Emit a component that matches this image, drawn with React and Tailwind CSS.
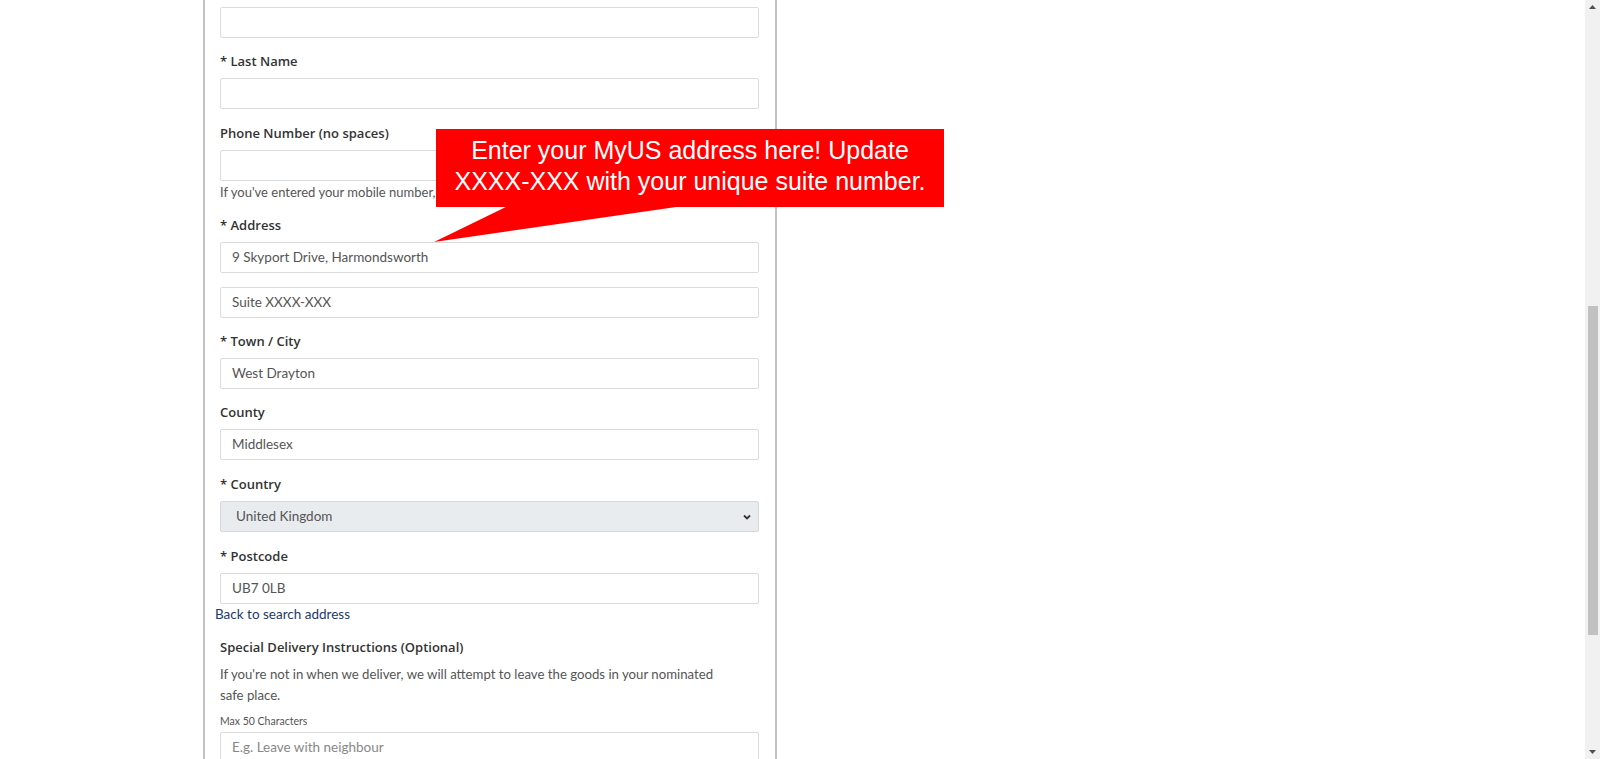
import React from 'react'

const font = { fontFamily: 'Lato, "Noto Sans", Arial, sans-serif' }
const labelFont = { fontFamily: '"Open Sans", Lato, Arial, sans-serif' }

const Label = ({ children }) => (
  <div className="text-[13px] leading-[18px] font-semibold text-[#333] mb-[8px]" style={labelFont}>{children}</div>
)

const Input = ({ value, placeholder, className = '' }) => (
  <div className={`h-[31px] border border-[#dcdcdc] rounded-[2px] bg-white px-[11px] flex items-center text-[13.5px] ${className}`}>
    {value ? <span className="text-[#555]">{value}</span> : <span className="text-[#888]">{placeholder}</span>}
  </div>
)

const Field = ({ label, value, gap = 'mb-[15px]' }) => (
  <div className={gap}>
    <Label>{label}</Label>
    <Input value={value} />
  </div>
)

function Callout() {
  return (
    <div className="absolute left-[436px] top-[129px] w-[508px]">
      <div className="h-[78px] bg-[#ff0000] flex flex-col items-center justify-center text-white text-[25px] leading-[31px] pb-[4px]" style={{ fontFamily: '"Liberation Sans", Arial, sans-serif' }}>
        <div>Enter your MyUS address here! Update</div>
        <div>XXXX-XXX with your unique suite number.</div>
      </div>
      <svg className="absolute left-0 top-[76px] overflow-visible" width="260" height="40" viewBox="0 0 260 40">
        <polygon points="74,0 254,0 -2,37" fill="#ff0000" />
      </svg>
    </div>
  )
}

function Scrollbar() {
  return (
    <div className="w-[15px] h-full bg-[#f1f1f1] flex flex-col items-center">
      <svg width="15" height="15" viewBox="0 0 15 15"><polygon points="4,9 11,9 7.5,5" fill="#505050" /></svg>
      <div className="h-[291px]" />
      <div className="w-[10px] h-[329px] bg-[#c1c1c1]" />
      <div className="flex-1" />
      <svg width="15" height="15" viewBox="0 0 15 15"><polygon points="4,6 11,6 7.5,10" fill="#505050" /></svg>
    </div>
  )
}

export default function App() {
  return (
    <div className="h-[759px] w-full overflow-hidden flex bg-white" style={font}>
      <div className="flex-1 relative">
        <div className="ml-[203px] w-[574px] h-full border-x-2 border-[#c2c2c2] pl-[15px] pr-[16px] pt-[7px]">
          <div className="mb-[14px]">
            <Input />
          </div>
          <Field label="* Last Name" />
          <div className="mb-[15px]">
            <Label>Phone Number (no spaces)</Label>
            <Input />
            <div className="mt-[2px] text-[13px] leading-[18px] text-[#555] whitespace-nowrap">
              If you've entered your mobile number, we'll send you delivery updates by text.
            </div>
          </div>
          <div className="mb-[14px]">
            <Label>* Address</Label>
            <Input value="9 Skyport Drive, Harmondsworth" />
            <Input value="Suite XXXX-XXX" className="mt-[14px]" />
          </div>
          <Field label="* Town / City" value="West Drayton" gap="mb-[14px]" />
          <Field label="County" value="Middlesex" />
          <div className="mb-[15px]">
            <Label>* Country</Label>
            <div className="h-[31px] border border-[#d6d9dc] rounded-[2px] bg-[#e9ecef] pl-[15px] pr-[6px] flex items-center justify-between text-[13.5px] text-[#555]">
              <span>United Kingdom</span>
              <svg width="10" height="10" viewBox="0 0 10 10"><path d="M2 3.5 L5 6.5 L8 3.5" fill="none" stroke="#333" strokeWidth="1.8" /></svg>
            </div>
          </div>
          <div>
            <Label>* Postcode</Label>
            <Input value="UB7 0LB" />
            <div className="ml-[-5px] mt-[1px] text-[13.5px] leading-[18px] text-[#1f3a68]">Back to search address</div>
          </div>
          <div className="mt-[15px] text-[13px] leading-[18px] font-semibold text-[#333]" style={labelFont}>Special Delivery Instructions (Optional)</div>
          <p className="mt-[8px] text-[13.2px] leading-[21px] text-[#555] pr-[34px]">
            If you're not in when we deliver, we will attempt to leave the goods in your nominated safe place.
          </p>
          <div className="mt-[8px] text-[10.5px] leading-[14px] text-[#555] mb-[4px]">Max 50 Characters</div>
          <Input placeholder="E.g. Leave with neighbour" />
        </div>
        <Callout />
      </div>
      <Scrollbar />
    </div>
  )
}
